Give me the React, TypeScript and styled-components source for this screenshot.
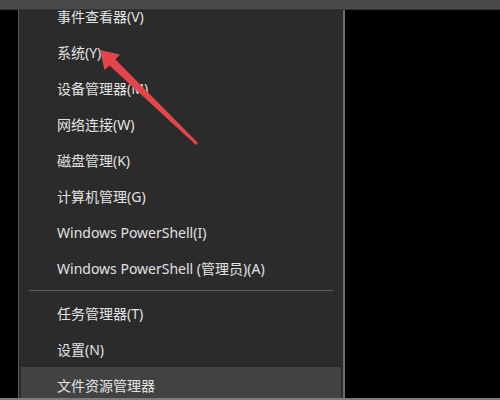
import styled, { createGlobalStyle } from 'styled-components';

const GlobalStyle = createGlobalStyle`
  html, body {
    margin: 0;
    padding: 0;
    background: #000;
  }
  body {
    font-family: "Noto Sans", "Noto Sans CJK SC", sans-serif;
  }
`;

const Screen = styled.div`
  position: relative;
  width: 500px;
  height: 400px;
  overflow: hidden;
  display: flex;
  flex-direction: column;
  background: #000;
`;

const TopBar = styled.div`
  height: 9px;
  flex-shrink: 0;
  background: #4a4a4a;
  border-bottom: 1px solid #333;
`;

const Body = styled.div`
  flex: 1;
  display: flex;
  min-height: 0;
  padding-left: 18px;
`;

const Menu = styled.div`
  width: 324px;
  background: #2b2b2b;
  border-left: 1px solid #575757;
  border-right: 2px solid #6c6c6c;
  overflow: hidden;
`;

const List = styled.div`
  margin-top: -12px;
  display: flex;
  flex-direction: column;
`;

const Item = styled.div<{ $active?: boolean }>`
  height: 36px;
  flex-shrink: 0;
  margin: 0 2px;
  padding-left: 36px;
  display: flex;
  align-items: center;
  font-size: 14px;
  color: #e2e2e2;
  white-space: nowrap;
  background: ${(p) => (p.$active ? '#424242' : 'transparent')};
`;

const Divider = styled.div`
  padding: 4px 10px;
  &::after {
    content: '';
    display: block;
    height: 1px;
    background: #5c5c5c;
  }
`;

const BottomLine = styled.div`
  height: 2px;
  flex-shrink: 0;
  background: #7c7c7c;
`;

const Overlay = styled.svg`
  position: absolute;
  left: 0;
  top: 0;
  pointer-events: none;
`;

const topItems = [
  '事件查看器(V)',
  '系统(Y)',
  '设备管理器(M)',
  '网络连接(W)',
  '磁盘管理(K)',
  '计算机管理(G)',
  'Windows PowerShell(I)',
  'Windows PowerShell (管理员)(A)',
];

const bottomItems = ['任务管理器(T)', '设置(N)', '文件资源管理器'];

export default function App() {
  return (
    <>
      <GlobalStyle />
      <Screen>
        <TopBar />
        <Body>
          <Menu>
            <List>
              {topItems.map((t) => (
                <Item key={t}>{t}</Item>
              ))}
              <Divider />
              {bottomItems.map((t, i) => (
                <Item key={t} $active={i === bottomItems.length - 1}>
                  {t}
                </Item>
              ))}
            </List>
          </Menu>
        </Body>
        <BottomLine />
        <Overlay width="500" height="400" viewBox="0 0 500 400">
          <polygon
            points="100,50 120,54.5 115.5,59.5 198,143 196,145 109.5,65.5 104.5,70"
            fill="#e2464a"
          />
        </Overlay>
      </Screen>
    </>
  );
}
